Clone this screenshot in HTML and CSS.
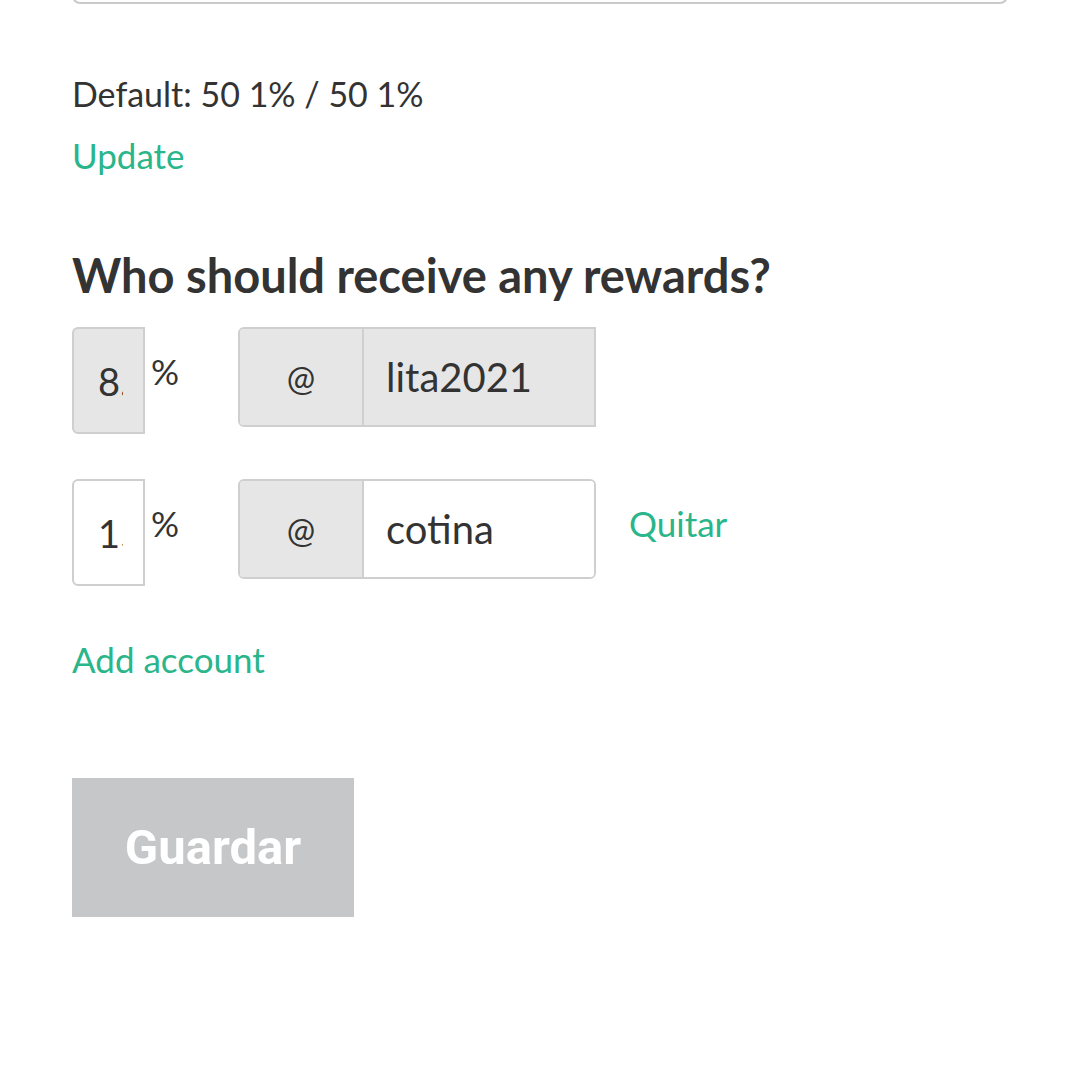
FILE: index.html
```html
<!DOCTYPE html>
<html>
<head>
<meta charset="utf-8">
<link rel="stylesheet" href="styles.css">
</head>
<body>
<div class="page">
  <div class="prev-box"></div>
  <p class="default">Default: 50 1% / 50 1%</p>
  <a class="link update">Update</a>
  <h2 class="title">Who should receive any rewards?</h2>
  <div class="row">
    <div class="pct-wrap">
      <input class="pct disabled" value="8.5" disabled>
      <span class="pct-sign">%</span>
    </div>
    <div class="user-group square-end">
      <span class="addon">@</span>
      <input class="user disabled" value="lita2021" disabled>
    </div>
  </div>
  <div class="row">
    <div class="pct-wrap">
      <input class="pct" value="15">
      <span class="pct-sign">%</span>
    </div>
    <div class="user-group">
      <span class="addon">@</span>
      <input class="user" value="cotina">
    </div>
    <a class="link quitar">Quitar</a>
  </div>
  <a class="link add">Add account</a>
  <button class="save">Guardar</button>
</div>
</body>
</html>
```
FILE: styles.css
```css
html, body {
  margin: 0;
  padding: 0;
  background: #fff;
}
body {
  font-family: "Lato", "Open Sans", sans-serif;
  color: #333;
}
.page {
  padding: 0 72px;
  display: flex;
  flex-direction: column;
  align-items: flex-start;
}
.prev-box {
  align-self: stretch;
  height: 40px;
  margin-top: -36px;
  border: 2px solid #c9c9c9;
  border-radius: 8px;
  box-sizing: border-box;
}
.default {
  margin: 68px 0 0 0;
  font-size: 34px;
  line-height: 44px;
}
.link {
  color: #2ab58a;
  font-size: 35px;
  line-height: 44px;
}
.update {
  margin-top: 17px;
}
.title {
  margin: 70px 0 0 0;
  font-size: 47px;
  line-height: 56px;
  font-weight: 700;
}
.row {
  display: flex;
  align-items: flex-start;
  margin-top: 24px;
}
.row + .row {
  margin-top: 45px;
}
.pct-wrap {
  display: flex;
  align-items: flex-start;
  width: 166px;
}
.pct {
  width: 73px;
  height: 107px;
  box-sizing: border-box;
  border: 2px solid #cfcfcf;
  border-radius: 6px 0 0 6px;
  padding: 0 20px 0 24px;
  font-family: inherit;
  font-size: 38px;
  color: #333;
  background: #fff;
  outline: none;
}
.pct.disabled, .user.disabled {
  background: #e6e6e6;
}
.pct-sign {
  margin-left: 6px;
  margin-top: 24px;
  font-size: 35px;
  line-height: 40px;
}
.user-group {
  display: flex;
  height: 100px;
  width: 358px;
  box-sizing: border-box;
  border: 2px solid #cfcfcf;
  border-radius: 6px;
  overflow: hidden;
}
.user-group.square-end {
  border-radius: 6px 0 0 6px;
}
.addon {
  width: 122px;
  background: #e6e6e6;
  border-right: 2px solid #cfcfcf;
  display: flex;
  align-items: center;
  justify-content: center;
  font-size: 34px;
}
.user {
  flex: 1;
  min-width: 0;
  border: none;
  padding: 0 0 0 22px;
  font-family: inherit;
  font-size: 40px;
  color: #333;
  background: #fff;
  outline: none;
}
.quitar {
  margin-left: 33px;
  margin-top: 22px;
}
.add {
  margin-top: 51px;
}
.save {
  margin-top: 97px;
  width: 282px;
  height: 139px;
  border: none;
  background: #c6c7c9;
  color: #fff;
  font-family: "Roboto", sans-serif;
  font-weight: 700;
  font-size: 49px;
  padding: 0;
}
```
